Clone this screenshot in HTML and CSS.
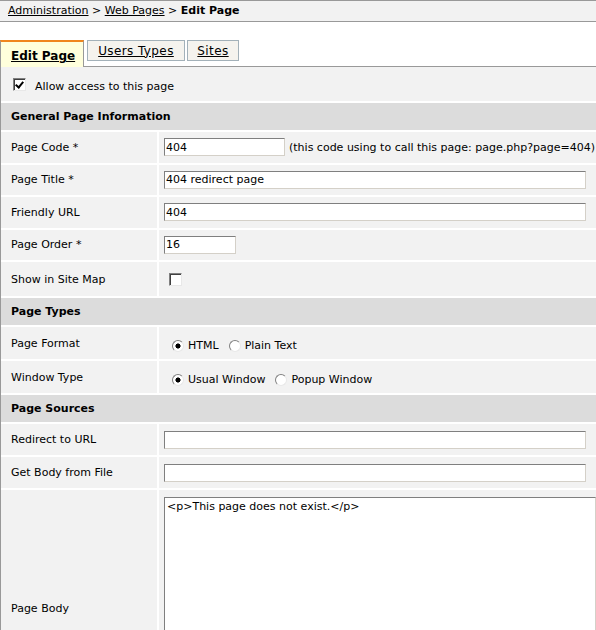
FILE: index.html
```html
<!DOCTYPE html>
<html>
<head>
<meta charset="utf-8">
<title>Edit Page</title>
<link rel="stylesheet" href="styles.css">
</head>
<body>
<div class="crumbs"><a href="#">Administration</a> &gt; <a href="#">Web Pages</a> &gt; <b>Edit Page</b></div>
<div class="tabs">
  <a href="#" class="tab active">Edit Page</a>
  <a href="#" class="tab tab-users">Users Types</a>
  <a href="#" class="tab tab-sites">Sites</a>
</div>
<form class="form">
  <div class="cell full check-row"><input type="checkbox" class="chk" checked><span class="chk-text">Allow access to this page</span></div>

  <div class="cell head">General Page Information</div>

  <div class="cell label r1">Page Code *</div>
  <div class="cell field r1"><input class="text w-code" value="404"><span class="hint">(this code using to call this page: page.php?page=404)</span></div>

  <div class="cell label r1">Page Title *</div>
  <div class="cell field r1"><input class="text w-wide" value="404 redirect page"></div>

  <div class="cell label r1">Friendly URL</div>
  <div class="cell field r1"><input class="text w-wide" value="404"></div>

  <div class="cell label r1">Page Order *</div>
  <div class="cell field r1"><input class="text w-order" value="16"></div>

  <div class="cell label r2">Show in Site Map</div>
  <div class="cell field r2"><input type="checkbox" class="chk chk-map"></div>

  <div class="cell head">Page Types</div>

  <div class="cell label r3">Page Format</div>
  <div class="cell field radios r3">
    <label class="opt"><input type="radio" name="fmt" class="rad" checked>HTML</label>
    <label class="opt"><input type="radio" name="fmt" class="rad">Plain Text</label>
  </div>

  <div class="cell label r3">Window Type</div>
  <div class="cell field radios r3">
    <label class="opt"><input type="radio" name="win" class="rad" checked>Usual Window</label>
    <label class="opt"><input type="radio" name="win" class="rad">Popup Window</label>
  </div>

  <div class="cell head">Page Sources</div>

  <div class="cell label r4">Redirect to URL</div>
  <div class="cell field r4"><input class="text w-wide" value=""></div>

  <div class="cell label r4">Get Body from File</div>
  <div class="cell field r4"><input class="text w-wide" value=""></div>

  <div class="cell label r5">Page Body</div>
  <div class="cell field r5 top"><textarea class="body-text" spellcheck="false">&lt;p&gt;This page does not exist.&lt;/p&gt;</textarea></div>
</form>
</body>
</html>
```
FILE: styles.css
```css
html, body {
  margin: 0;
  padding: 0;
  overflow: hidden;
  background: #fff;
}
body {
  font-family: "DejaVu Sans", "Liberation Sans", sans-serif;
  font-size: 11px;
  color: #000;
}
a {
  color: #000;
  text-decoration: underline;
}

.crumbs {
  height: 20px;
  line-height: 20px;
  border-top: 1px solid #999;
  border-bottom: 1px solid #999;
  background: #f2f2f2;
  padding-left: 8px;
  white-space: nowrap;
}

.tabs {
  height: 44px;
  border-bottom: 1px solid #999;
  display: flex;
  align-items: flex-end;
}
.tab {
  display: flex;
  align-items: center;
  box-sizing: border-box;
  white-space: nowrap;
  font-size: 12px;
}
.tab.active {
  width: 84px;
  height: 27px;
  margin-bottom: -1px;
  padding: 3px 0 0 10px;
  border-left: 1px solid #999;
  border-right: 1px solid #999;
  border-top: 2px solid #f0861e;
  background: #ffffdc;
  font-weight: bold;
}
.tab-users, .tab-sites {
  height: 21px;
  margin-bottom: 5px;
  justify-content: center;
  border: 1px solid #a3b1b9;
  background: #f5f3ee;
  letter-spacing: 0.4px;
}
.tab-users { margin-left: 3px; width: 98px; }
.tab-sites { margin-left: 2px; width: 52px; }

.form {
  border-left: 1px solid #999;
  display: grid;
  grid-template-columns: 156px minmax(0, 1fr);
  gap: 2px;
  background: #fff;
  margin: 0;
}
.cell {
  background: #f2f2f2;
  display: flex;
  align-items: center;
  white-space: nowrap;
  box-sizing: border-box;
}
.full { grid-column: 1 / -1; }
.check-row {
  height: 34px;
  padding-left: 12px;
}
.chk-text { padding-top: 4px; }
.head {
  grid-column: 1 / -1;
  height: 27px;
  background: #dcdcdc;
  font-weight: bold;
  padding-left: 10px;
}
.label { padding-left: 10px; }
.field { padding-left: 5px; }
.r1 { height: 30.5px; }
.r2 { height: 34px; }
.r3 { height: 32px; }
.r4 { height: 31px; }
.r5 { height: 236px; }
.top { align-items: flex-start; }

.text {
  box-sizing: border-box;
  height: 18px;
  margin: 0;
  padding: 0 1px;
  border: 1px solid;
  border-color: #7f7f7f #d4d0c8 #d4d0c8 #7f7f7f;
  background: #fff;
  font-family: inherit;
  font-size: 11px;
  color: #000;
}
.w-code { width: 121px; }
.w-wide { width: 422px; }
.w-order { width: 72px; }
.hint { margin-left: 4px; }

.chk {
  appearance: none;
  -webkit-appearance: none;
  box-sizing: border-box;
  width: 13px;
  height: 13px;
  margin: 0 9px 0 0;
  border: 1px solid;
  border-color: #808080 #e8e8e8 #e8e8e8 #808080;
  box-shadow: inset 1px 1px 0 #404040;
  background: #fff;
  position: relative;
  flex: none;
}
.chk:checked::after {
  content: "";
  position: absolute;
  left: 3px;
  top: 1px;
  width: 3px;
  height: 6px;
  border-right: 2px solid #000;
  border-bottom: 2px solid #000;
  transform: rotate(40deg);
}
.chk-map { margin-left: 5px; }

.radios {
  padding-left: 13px;
  padding-top: 5px;
}
.opt {
  display: flex;
  align-items: center;
  margin-right: 10px;
}
.rad {
  appearance: none;
  -webkit-appearance: none;
  box-sizing: border-box;
  width: 12px;
  height: 12px;
  margin: 0 4px 0 0;
  border-radius: 50%;
  border: 1px solid;
  border-color: #808080 #e8e8e8 #e8e8e8 #808080;
  background: #fff;
  flex: none;
}
.rad:checked {
  background: radial-gradient(circle, #000 0, #000 2.3px, #fff 2.8px);
}

.body-text {
  box-sizing: border-box;
  width: 600px;
  height: 222px;
  margin: 7px 0 0 0;
  padding: 2px 2px;
  border: 1px solid;
  border-color: #7f7f7f #d4d0c8 #d4d0c8 #7f7f7f;
  background: #fff;
  font-family: inherit;
  font-size: 11px;
  line-height: 14px;
  color: #000;
  resize: none;
}
```
